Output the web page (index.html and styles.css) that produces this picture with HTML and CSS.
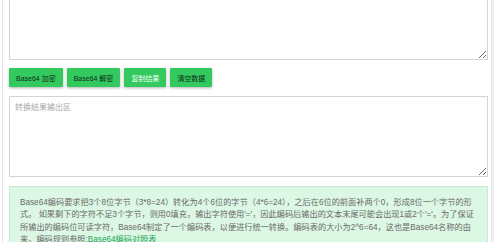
FILE: index.html
```html
<!DOCTYPE html>
<html lang="zh">
<head>
<meta charset="utf-8">
<title>Base64 编码解码</title>
<link rel="stylesheet" href="styles.css">
</head>
<body>
<div class="page">
  <textarea class="box box-in"></textarea>
  <div class="btns">
    <button class="btn">Base64 加密</button>
    <button class="btn">Base64 解密</button>
    <button class="btn btn-light">复制结果</button>
    <button class="btn">清空数据</button>
  </div>
  <textarea class="box box-out" placeholder="转换结果输出区"></textarea>
  <div class="info">Base64编码要求把3个8位字节（3*8=24）转化为4个6位的字节（4*6=24），之后在6位的前面补两个0，形成8位一个字节的形式。 如果剩下的字符不足3个字节，则用0填充，输出字符使用'='，因此编码后输出的文本末尾可能会出现1或2个'='。为了保证所输出的编码位可读字符，Base64制定了一个编码表，以便进行统一转换。编码表的大小为2^6=64，这也是Base64名称的由来。编码规则参照:<a class="link" href="#">Base64编码对照表</a></div>
</div>
</body>
</html>
```

FILE: styles.css
```css
html, body {
  margin: 0;
  padding: 0;
  background: #fff;
  overflow: hidden;
}
body {
  font-family: "Liberation Sans", "Noto Sans CJK SC", sans-serif;
  color: #333;
}
.page {
  margin: -20px 0 0 2px;
  width: 490px;
  box-sizing: border-box;
  border-left: 1px solid #e6e6e6;
  border-right: 1px solid #e6e6e6;
  box-shadow: 2px 0 0 #f0f0f0;
  padding: 0 3px 0 6px;
  min-height: 300px;
}
.box {
  display: block;
  width: 100%;
  box-sizing: border-box;
  border: 1px solid #d4d4d4;
  border-radius: 0;
  padding: 5px 5px;
  margin: 0;
  font-family: "Liberation Sans", "Noto Sans CJK SC", sans-serif;
  font-size: 8px;
  line-height: 12px;
  resize: vertical;
  outline: none;
}
.box::placeholder {
  color: #a8a8a8;
}
.box-in {
  height: 80px;
}
.box-out {
  height: 81px;
}
.btns {
  display: flex;
  gap: 4px;
  margin: 8px 0 9px;
}
.btn {
  height: 19px;
  padding: 0 7px;
  border: 0;
  border-radius: 1px;
  background: #34c95f;
  color: #0f2e17;
  font-family: "Liberation Sans", "Noto Sans CJK SC", sans-serif;
  font-size: 7px;
  box-shadow: 0 1px 3px rgba(0, 0, 0, 0.3);
  cursor: pointer;
}
.btn-light {
  color: #eafff0;
}
.info {
  margin-top: 9px;
  padding: 10px 9px 9px 10px;
  background: #dcf7e4;
  border: 1px solid #c2ebd0;
  color: #6b6b6b;
  font-size: 8.2px;
  line-height: 12.4px;
}
.link {
  color: #23a65a;
  text-decoration: none;
}
```
